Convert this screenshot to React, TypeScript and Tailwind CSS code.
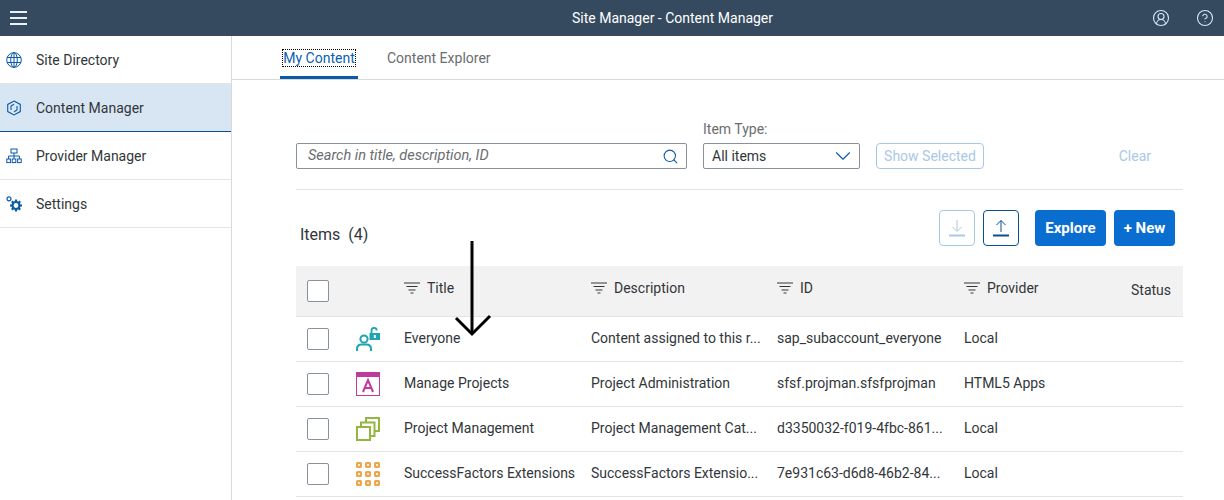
import { ChevronDown, CircleHelp, CircleUserRound, Search } from 'lucide-react'
import type { ReactNode } from 'react'

const FilterIcon = () => (
  <svg width="16" height="12" viewBox="0 0 16 12" className="shrink-0 text-[#32363a]">
    <path d="M0 1h16M2.500 4.500h11M4.500 8h7M6.500 11h3" stroke="currentColor" fill="none" />
  </svg>
)

const GlobeIcon = () => (
  <svg width="16" height="16" viewBox="0 0 16 16" fill="none" stroke="#0a5aa5">
    <circle cx="8" cy="8" r="7.300" />
    <ellipse cx="8" cy="8" rx="3.300" ry="7.300" />
    <path d="M8 .7v14.600M1 5.500h14M1 10.500h14" />
  </svg>
)

const HexIcon = () => (
  <svg width="16" height="16" viewBox="0 0 16 16" fill="none" stroke="#0a5aa5" strokeWidth="1.100">
    <path d="M8 1l6.300 3.400v7.200L8 15l-6.300-3.400V4.400z" />
    <path d="M5 6l3-1.800M8 11.800l3-1.800M11 6v4M5 6v4" />
  </svg>
)

const TreeIcon = () => (
  <svg width="16" height="16" viewBox="0 0 16 16" fill="none" stroke="#0a5aa5">
    <rect x="5" y="1" width="6" height="4" />
    <rect x=".8" y="11" width="3.600" height="3.600" />
    <rect x="6.200" y="11" width="3.600" height="3.600" />
    <rect x="11.600" y="11" width="3.600" height="3.600" />
    <path d="M8 5v6M2.600 11V8h10.800v3" />
  </svg>
)

const GearsIcon = () => (
  <svg width="16" height="16" viewBox="0 0 16 16" fill="none" stroke="#0a5aa5">
    <circle cx="3" cy="2.800" r="2" strokeWidth="1.200" />
    <circle cx="10" cy="9.500" r="3.500" strokeWidth="2.200" />
    <path
      d="M10 3.500v2M10 13.500v2M4 9.500h2M14 9.500h2M5.800 5.300l1.400 1.400M12.800 12.300l1.400 1.400M14.200 5.300l-1.400 1.400M7.200 12.300l-1.400 1.400"
      strokeWidth="2.200"
    />
  </svg>
)

const EveryoneIcon = () => (
  <svg width="24" height="24" viewBox="0 0 24 24" fill="none" stroke="#1fa4b4">
    <circle cx="8" cy="12" r="3.600" strokeWidth="2" />
    <path d="M1 24v-2C1 19 3 17.500 5.500 17.500h5c2.500 0 4.500 1.500 4.500 4.500v2" strokeWidth="2" />
    <path d="M15.500 6V3.500a2.600 2.600 0 0 1 5.200 0" strokeWidth="1.800" />
    <rect x="13.500" y="6" width="10.500" height="7" fill="#1fa4b4" stroke="none" />
    <rect x="17.800" y="8" width="2" height="3" fill="#fff" stroke="none" />
  </svg>
)

const AppIcon = () => (
  <svg width="24" height="24" viewBox="0 0 24 24" fill="none">
    <rect x=".5" y=".5" width="23" height="23" stroke="#c0399f" />
    <rect x="0" y="0" width="24" height="5" fill="#c0399f" />
    <path d="M7 20l5-12 5 12M8.600 16h6.800" stroke="#c0399f" strokeWidth="2" />
  </svg>
)

const CatalogIcon = () => (
  <svg width="24" height="24" viewBox="0 0 24 24" fill="none" stroke="#93b541" strokeWidth="2">
    <rect x="1" y="10" width="13" height="13" />
    <path d="M5 9.500V5.500h13.500V19H14.500" />
    <path d="M10 5V1h13v13H18.500" />
  </svg>
)

const GroupIcon = () => (
  <svg width="24" height="24" viewBox="0 0 24 24" fill="#fbeeda" stroke="#eea54b" strokeWidth="2">
    {[1, 10, 19].map((y) =>
      [1, 10, 19].map((x) => <rect key={`${x}-${y}`} x={x} y={y} width="4" height="4" rx="0.500" />),
    )}
  </svg>
)

const Checkbox = () => <div className="h-[22px] w-[22px] rounded-[2px] border border-[#89919a] bg-white" />

const NavItem = ({ icon, label, active }: { icon: ReactNode; label: string; active?: boolean }) => (
  <div
    className={`flex h-12 items-center gap-[14px] border-b pl-[6px] ${
      active ? 'border-[#0a4f8f] bg-[#d8e6f4]' : 'border-[#e4e4e4]'
    }`}
  >
    {icon}
    <span className="text-sm text-[#32363a]">{label}</span>
  </div>
)

const rowGrid = 'grid grid-cols-[48px_49px_187px_186px_187px_167px_1fr] items-center'

const HeaderCell = ({ label }: { label: string }) => (
  <div className="flex items-center gap-[7px] pb-[6px] text-sm text-[#32363a]">
    <FilterIcon />
    <span>{label}</span>
  </div>
)

const rows = [
  {
    icon: <EveryoneIcon />,
    title: 'Everyone',
    description: 'Content assigned to this r...',
    id: 'sap_subaccount_everyone',
    provider: 'Local',
  },
  {
    icon: <AppIcon />,
    title: 'Manage Projects',
    description: 'Project Administration',
    id: 'sfsf.projman.sfsfprojman',
    provider: 'HTML5 Apps',
  },
  {
    icon: <CatalogIcon />,
    title: 'Project Management',
    description: 'Project Management Cat...',
    id: 'd3350032-f019-4fbc-861...',
    provider: 'Local',
  },
  {
    icon: <GroupIcon />,
    title: 'SuccessFactors Extensions',
    description: 'SuccessFactors Extensio...',
    id: '7e931c63-d6d8-46b2-84...',
    provider: 'Local',
  },
]

export default function App() {
  return (
    <div className="relative flex h-[500px] w-[1224px] flex-col overflow-hidden bg-white font-['Roboto',sans-serif] text-sm text-[#32363a]">
      <header className="flex h-9 shrink-0 items-center bg-[#354a5f] pl-[10px] pr-[10px] text-white">
        <div className="flex w-[17px] flex-col gap-[4px]">
          <div className="h-[2px] bg-[#e8f2fb]" />
          <div className="h-[2px] bg-[#e8f2fb]" />
          <div className="h-[2px] bg-[#e8f2fb]" />
        </div>
        <div className="flex-1 pl-[166px] text-center text-sm">Site Manager - Content Manager</div>
        <CircleUserRound size={18} strokeWidth={1.500} className="mr-[26px] text-[#d1e8ff]" />
        <CircleHelp size={18} strokeWidth={1.500} className="text-[#d1e8ff]" />
      </header>

      <div className="flex flex-1">
        <aside className="w-[232px] shrink-0 border-r border-[#d9d9d9]">
          <NavItem icon={<GlobeIcon />} label="Site Directory" />
          <NavItem icon={<HexIcon />} label="Content Manager" active />
          <NavItem icon={<TreeIcon />} label="Provider Manager" />
          <NavItem icon={<GearsIcon />} label="Settings" />
        </aside>

        <main className="flex-1">
          <div className="flex h-11 items-stretch gap-[29px] border-b border-[#d9d9d9] pl-[48px]">
            <div className="relative flex w-[78px] items-center justify-center">
              <span className="whitespace-nowrap border border-dotted border-black leading-[16px] text-[#0a5fb0]">
                My Content
              </span>
              <div className="absolute inset-x-0 bottom-0 h-[3px] bg-[#0a5aa5]" />
            </div>
            <div className="flex items-center text-[#6a6d70]">Content Explorer</div>
          </div>

          <div className="pl-[64px] pr-[41px]">
            <div className="flex items-end border-b border-[#e4e4e4] pb-5 pt-10">
              <div className="flex h-[26px] w-[391px] items-center justify-between rounded-[2px] border border-[#89919a] pl-[11px] pr-[7px]">
                <span className="pt-px text-[14.500px] italic text-[#6a6d70]">Search in title, description, ID</span>
                <Search size={17} strokeWidth={1.500} className="text-[#0a5aa5]" />
              </div>
              <div className="ml-4 flex flex-col">
                <span className="mb-[5px] text-sm leading-[18px] text-[#6a6d70]">Item Type:</span>
                <div className="flex h-[26px] w-[157px] items-center justify-between rounded-[2px] border border-[#89919a] pl-[8px] pr-[3px]">
                  <span>All items</span>
                  <ChevronDown size={26} strokeWidth={1} className="text-[#0a5aa5]" />
                </div>
              </div>
              <div className="ml-4 flex h-[26px] w-[108px] items-center justify-center rounded-[4px] border border-[#a9c8e6] text-sm text-[#a9c8e6]">
                Show Selected
              </div>
              <div className="ml-auto flex h-[26px] items-center pr-[32px] text-sm text-[#a9c8e6]">Clear</div>
            </div>

            <div className="flex h-[76px] items-center pl-1 pr-2">
              <span className="pt-[14px] text-base">Items&nbsp;&nbsp;(4)</span>
              <div className="ml-auto flex items-center">
                <div className="flex h-9 w-9 items-center justify-center rounded-[4px] border border-[#a9c8e6]">
                  <svg width="16" height="18" viewBox="0 0 16 18" fill="none" stroke="#a9c8e6">
                    <path d="M8 1v11M3.500 8L8 12.500 12.500 8" />
                    <path d="M0 16.500h16" strokeWidth="2" />
                  </svg>
                </div>
                <div className="ml-2 flex h-9 w-9 items-center justify-center rounded-[4px] border border-[#0a4f8f]">
                  <svg width="16" height="18" viewBox="0 0 16 18" fill="none" stroke="#0a4f8f">
                    <path d="M8 13V1.500M3.500 6L8 1.500 12.500 6" />
                    <path d="M0 16.500h16" strokeWidth="2" />
                  </svg>
                </div>
                <div className="ml-4 flex h-9 w-[71px] items-center justify-center rounded-[4px] bg-[#0a6ed1] pt-px text-[15px] font-bold text-white">
                  Explore
                </div>
                <div className="ml-2 flex h-9 w-[61px] items-center justify-center rounded-[4px] bg-[#0a6ed1] pt-px text-[15px] font-bold text-white">
                  + New
                </div>
              </div>
            </div>

            <div className={`${rowGrid} h-[51px] border-b border-[#e4e4e4] bg-[#f2f2f2] pl-[11px]`}>
              <Checkbox />
              <div />
              <HeaderCell label="Title" />
              <HeaderCell label="Description" />
              <HeaderCell label="ID" />
              <HeaderCell label="Provider" />
              <div className="pb-[2px] text-sm">Status</div>
            </div>
            {rows.map((row) => (
              <div key={row.title} className={`${rowGrid} h-[45px] border-b border-[#e4e4e4] pl-[11px]`}>
                <Checkbox />
                <div className="pl-px">{row.icon}</div>
                <div className="whitespace-nowrap pb-[2px] text-sm">{row.title}</div>
                <div className="whitespace-nowrap pb-[2px] text-sm">{row.description}</div>
                <div className="whitespace-nowrap pb-[2px] text-sm">{row.id}</div>
                <div className="whitespace-nowrap pb-[2px] text-sm">{row.provider}</div>
                <div />
              </div>
            ))}
          </div>
        </main>
      </div>

      {/* arrow drawn over the screenshot */}
      <svg width="40" height="100" viewBox="0 0 40 100" fill="none" stroke="#000" className="absolute left-[452px] top-[238px]">
        <path d="M20 3v93" strokeWidth="3" />
        <path d="M4 80l16 16 18-18" strokeWidth="3" />
      </svg>
    </div>
  )
}
